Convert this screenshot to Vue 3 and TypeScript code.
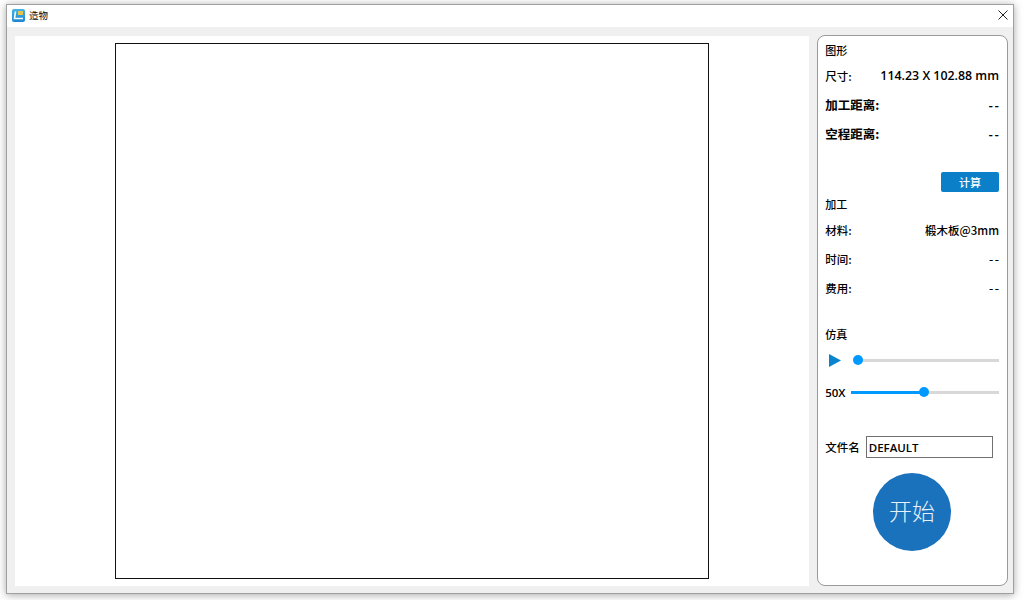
<template>
  <div class="desktop">
    <div class="window">
      <header class="titlebar">
        <svg class="app-icon" width="13" height="13" viewBox="0 0 13 13">
          <defs>
            <linearGradient id="appBg" x1="0" y1="0" x2="0" y2="1">
              <stop offset="0" stop-color="#45b4e8" />
              <stop offset="1" stop-color="#1b86cf" />
            </linearGradient>
          </defs>
          <rect width="13" height="13" rx="2" fill="url(#appBg)" />
          <path d="M3.5 2.5 L2.5 9.5 H11" fill="none" stroke="#fff" stroke-width="1.6" />
          <rect x="6" y="2" width="5" height="4" fill="#e3c24e" />
        </svg>
        <span class="title">造物</span>
        <svg class="close" width="10" height="10" viewBox="0 0 10 10">
          <path d="M0.5 0.5 L9.5 9.5 M9.5 0.5 L0.5 9.5" stroke="#222" stroke-width="1" fill="none" />
        </svg>
      </header>

      <main class="body">
        <section class="canvas-panel">
          <div class="canvas"></div>
        </section>

        <aside class="side">
          <h3 class="heading first">图形</h3>
          <div class="row size-row"><span>尺寸:</span><span class="size-value">114.23 X 102.88 mm</span></div>
          <div class="row strong dist-a"><span>加工距离:</span><span class="dash">--</span></div>
          <div class="row strong dist-b"><span>空程距离:</span><span class="dash">--</span></div>

          <div class="calc-wrap"><button class="calc">计算</button></div>

          <h3 class="heading">加工</h3>
          <div class="row mat-row"><span>材料:</span><span>椴木板@3mm</span></div>
          <div class="row next"><span>时间:</span><span class="dash">--</span></div>
          <div class="row next"><span>费用:</span><span class="dash">--</span></div>

          <h3 class="heading sim">仿真</h3>
          <div class="slider-row play-row">
            <svg class="play" width="12" height="13" viewBox="0 0 12 13">
              <path d="M0 0 L12 6.5 L0 13 Z" fill="#0b84cf" />
            </svg>
            <div class="slider">
              <div class="fill" :style="{ width: progress + '%' }"></div>
              <div class="thumb" :style="{ left: progress + '%' }"></div>
            </div>
          </div>
          <div class="slider-row speed-row">
            <span class="speed">50X</span>
            <div class="slider">
              <div class="fill" :style="{ width: speed + '%' }"></div>
              <div class="thumb" :style="{ left: speed + '%' }"></div>
            </div>
          </div>

          <div class="file-row">
            <span>文件名</span>
            <input class="file-input" value="DEFAULT" />
          </div>

          <div class="start-wrap"><button class="start">开始</button></div>
        </aside>
      </main>
    </div>
  </div>
</template>

<script setup lang="ts">
import { ref } from 'vue'

const progress = ref(0)
const speed = ref(49)
</script>

<style>
html,
body {
  margin: 0;
  background: #fff;
}
</style>

<style scoped>
.desktop {
  width: 1024px;
  height: 600px;
  box-sizing: border-box;
  padding: 4px 10px 6px 6px;
  overflow: hidden;
  font-family: "Noto Sans CJK SC", "Noto Sans", sans-serif;
  color: #000;
}

.window {
  height: 100%;
  display: flex;
  flex-direction: column;
  box-sizing: border-box;
  background: #f0f0f0;
  border: 1px solid #a0a0a0;
  box-shadow: 0 1px 8px rgba(0, 0, 0, 0.35);
}

.titlebar {
  height: 22px;
  flex: none;
  box-sizing: border-box;
  display: flex;
  align-items: center;
  padding: 0 5px 2px 5px;
  background: #fff;
}

.app-icon {
  flex: none;
}

.title {
  margin-left: 4px;
  font-size: 9.5px;
}

.close {
  margin-left: auto;
}

.body {
  flex: 1;
  min-height: 0;
  display: flex;
  gap: 8px;
  padding: 8px 5px 7px 8px;
}

.canvas-panel {
  width: 795px;
  margin-top: 1px;
  box-sizing: border-box;
  padding: 7px 0 7px 100px;
  background: #fff;
}

.canvas {
  width: 594px;
  height: 100%;
  box-sizing: border-box;
  border: 1px solid #111;
}

.side {
  width: 191px;
  box-sizing: border-box;
  display: flex;
  flex-direction: column;
  padding: 0 8px 0 7px;
  background: #fff;
  border: 1px solid #9a9a9a;
  border-radius: 8px;
  font-size: 11.5px;
  font-weight: 500;
}

.heading {
  margin: 0;
  height: 16px;
  line-height: 16px;
  font-size: 11px;
  font-weight: 500;
}

.heading.first {
  margin-top: 6px;
}

.row {
  display: flex;
  justify-content: space-between;
  height: 16px;
  line-height: 16px;
}

.size-row {
  margin-top: 10px;
}

.size-value {
  font-family: "Open Sans", sans-serif;
  font-size: 12.4px;
  font-weight: 600;
}

.strong {
  font-size: 12.5px;
  font-weight: 700;
}

.dash {
  font-size: 12px;
  letter-spacing: 1.5px;
  margin-right: -1.5px;
}

.dist-a {
  margin-top: 13px;
}

.dist-b {
  margin-top: 13px;
}

.calc-wrap {
  margin-top: 30px;
  display: flex;
  justify-content: flex-end;
}

.calc {
  width: 58px;
  height: 20px;
  padding: 0;
  border: none;
  border-radius: 2px;
  background: #0b80c9;
  color: #fff;
  font: 500 11px "Noto Sans CJK SC", sans-serif;
}

.calc-wrap + .heading {
  margin-top: 4px;
}

.mat-row {
  margin-top: 10px;
}

.next {
  margin-top: 13px;
}

.heading.sim {
  margin-top: 30px;
}

.slider-row {
  display: flex;
  align-items: center;
  height: 14px;
}

.play-row {
  margin-top: 11px;
}

.speed-row {
  margin-top: 18px;
}

.play {
  flex: none;
  margin: 0 17px 0 4px;
}

.speed {
  flex: none;
  width: 26px;
  font-family: "Open Sans", sans-serif;
  font-size: 11.5px;
  font-weight: 600;
}

.slider {
  position: relative;
  flex: 1;
  height: 3px;
  background: #d8d8d8;
}

.fill {
  position: absolute;
  left: 0;
  top: 0;
  bottom: 0;
  background: #0099ff;
}

.thumb {
  position: absolute;
  top: 50%;
  width: 10px;
  height: 10px;
  border-radius: 50%;
  background: #0099ff;
  transform: translate(-50%, -50%);
}

.file-row {
  margin-top: 37px;
  display: flex;
  align-items: center;
  gap: 6px;
  height: 22px;
}

.file-input {
  width: 127px;
  height: 22px;
  box-sizing: border-box;
  padding: 0 2px;
  border: 1px solid #707070;
  outline: none;
  font-family: "Open Sans", sans-serif;
  font-size: 11.5px;
  font-weight: 600;
  color: #000;
}

.start-wrap {
  margin-top: 15px;
  display: flex;
  justify-content: center;
}

.start {
  width: 78px;
  height: 78px;
  padding: 0 0 4px;
  border: none;
  border-radius: 50%;
  background: #1a72bd;
  color: #e8f1f8;
  font: 300 23px "Noto Sans CJK SC", sans-serif;
}
</style>
